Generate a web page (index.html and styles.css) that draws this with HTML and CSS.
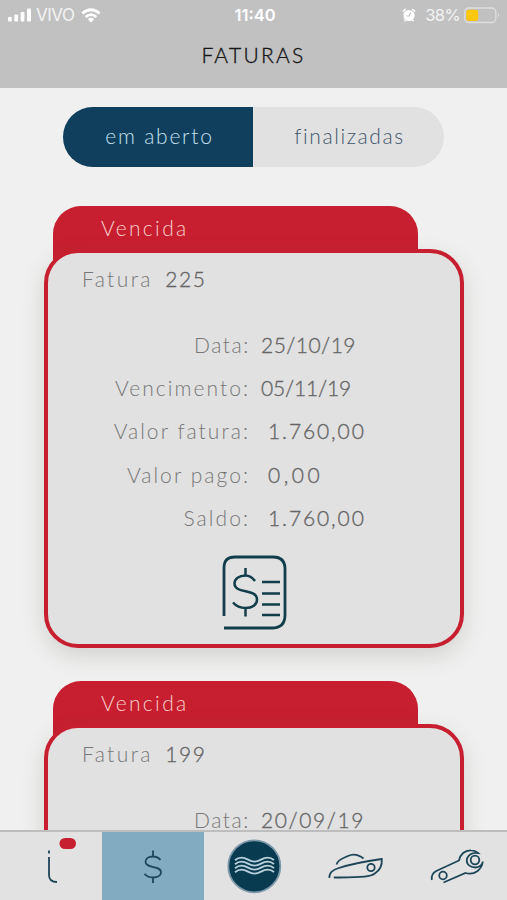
FILE: index.html
```html
<!DOCTYPE html>
<html lang="pt-BR">
<head>
<meta charset="utf-8">
<title>Faturas</title>
<link rel="stylesheet" href="styles.css">
</head>
<body>
<div class="app">
  <header class="header">
    <div class="status">
      <div class="status-left">
        <svg class="signal" width="24" height="14" viewBox="0 0 24 14"><rect x="0" y="9" width="3.8" height="4.5" rx="1"/><rect x="6.3" y="6.5" width="3.8" height="7" rx="1"/><rect x="12.6" y="4" width="3.8" height="9.5" rx="1"/><rect x="19" y="0.5" width="4" height="13" rx="1"/></svg>
        <span class="carrier">VIVO</span>
        <svg class="wifi" width="20" height="15" viewBox="0 0 20 15"><path d="M1.3 5.5Q10 -2 18.7 5.5" class="arc"/><path d="M4.6 9Q10 4.4 15.4 9" class="arc"/><path d="M6.8 11.2Q10 8.5 13.2 11.2L10 14.5Z"/></svg>
      </div>
      <span class="clock">11:40</span>
      <div class="status-right">
        <svg class="alarm" width="14" height="14" viewBox="0 0 14 14"><circle cx="7" cy="7.5" r="5.6"/><path d="M.8 3.6 3.7 1M13.2 3.6 10.3 1M3.5 12l-1 1.3M10.5 12l1 1.3" class="arm"/><path d="M8.6 4.4 7.2 8H4.5" class="hands"/></svg>
        <span class="percent">38%</span>
        <svg class="battery" width="36" height="17" viewBox="0 0 36 17"><rect x=".8" y="1" width="31" height="14.5" rx="4" class="shell"/><rect x="2.2" y="2.7" width="12" height="11.2" rx="2.4" class="level"/><path d="M34 6q2 2.2 0 4.4Z" class="tip"/></svg>
      </div>
    </div>
    <h1 class="title">FATURAS</h1>
  </header>

  <main class="content">
    <div class="segments">
      <div class="segment active"><span class="open-label">em aberto</span></div>
      <div class="segment"><span class="done-label">finalizadas</span></div>
    </div>

    <section class="invoice">
      <div class="tab">Vencida</div>
      <div class="card">
        <div class="number"><span>Fatura</span><span class="number-value">225</span></div>
        <dl class="details">
          <dt class="l-data">Data:</dt><dd class="date-a">25/10/19</dd>
          <dt>Vencimento:</dt><dd class="date-b">05/11/19</dd>
          <dt>Valor fatura:</dt><dd class="money">1.760,00</dd>
          <dt>Valor pago:</dt><dd class="money paid">0,00</dd>
          <dt>Saldo:</dt><dd class="money">1.760,00</dd>
        </dl>
        <svg class="bill" width="66" height="76" viewBox="0 0 66 76"><path d="M3 62V14Q3 3 14 3H52Q64 3 64 15V61Q64 74 51 74H3"/><path d="M34 27C31 23 28 21.500 24.500 21.500c-6.500 0-11 3.500-11 8C13.500 40.500 36 34 36 45.500c0 5-4.500 8.500-11.500 8.500-5.500 0-9.500-2-12.500-5.500M24.500 14v7.500M24.500 54v8.500" class="thin"/><path d="M41 28H59M41 39.500H59M41 50.500H59M41 61H59" class="thin"/></svg>
      </div>
    </section>

    <section class="invoice">
      <div class="tab">Vencida</div>
      <div class="card">
        <div class="number"><span>Fatura</span><span class="number-value">199</span></div>
        <dl class="details">
          <dt class="l-data">Data:</dt><dd>20/09/19</dd>
        </dl>
      </div>
    </section>
  </main>

  <nav class="nav">
    <div class="item">
      <svg width="101" height="68" viewBox="0 832 101 68"><path d="M49 850.500v3M49 857v18q0 7 8 7"/><rect x="59.500" y="838" width="16.500" height="11" rx="5.500" class="badge"/></svg>
    </div>
    <div class="item selected">
      <svg width="102" height="68" viewBox="102 832 102 68"><path d="M160.500 860c-2-2.500-4.500-3.500-7.500-3.500-4.500 0-7.500 2.300-7.500 5.300 0 7.500 15.500 3 15.500 10.400 0 3.300-3.300 5.300-8 5.300-3.700 0-6.500-1.200-8.500-3.700M153 850.500v6M153 877.500v5.500"/></svg>
    </div>
    <div class="item">
      <svg width="101" height="68" viewBox="204 832 101 68"><circle cx="254.300" cy="866.300" r="26" class="disc"/><g class="waves"><path id="wave" d="M235 860.200q3-2.600 6.500-2.600c6 0 7 4 13 4s7-4 13-4q4 0 6.500 2.600"/><use href="#wave" y="4"/><use href="#wave" y="8"/><use href="#wave" y="12"/></g></svg>
    </div>
    <div class="item">
      <svg width="101" height="68" viewBox="305 832 101 68"><path d="M336.500 864.500C338 859 344 858 348 856c6-3 11-1 15.500 2.500M329.300 878q0-7 8-9.500 16-5.500 44.500-9.500c.5 6-1.500 11-7 14.500-4 3-10 4.200-41 4"/><circle cx="371" cy="867.500" r="3.700"/></svg>
    </div>
    <div class="item">
      <svg width="101" height="68" viewBox="406 832 101 68"><path d="M431.800 880q-1-6 4.500-9L459 860.500c1-6 6-10.500 12-10.200q4 0 7 2.700-8-1-11 5.500c-1.500 7 5 9 8.500 9 4 0 7-3 7.300-6-1 8-8 14-17.300 11.500L443.500 882.500"/><circle cx="443" cy="875.500" r="3.800"/><circle cx="475" cy="860" r="4.300"/></svg>
    </div>
  </nav>
</div>
</body>
</html>
```
FILE: styles.css
```css
* { box-sizing: border-box; }
body { margin: 0; background: #f0f0f0; font-family: Lato, "Open Sans", sans-serif; font-weight: 300; font-size: 21px; line-height: 26px; }
.app { width: 507px; height: 900px; display: flex; flex-direction: column; overflow: hidden; white-space: nowrap; }
svg { display: block; flex: none; }

.header { height: 88px; flex: none; background: #c1c1c1; }
.status { height: 30px; padding: 0 7px 0 8px; display: grid; grid-template-columns: 1fr auto 1fr; align-items: center; color: #fff; fill: #fff; font: 400 17px/20px Inter, sans-serif; }
.status-left, .status-right { display: flex; align-items: center; }
.status-right { justify-content: flex-end; }
.carrier { margin: 0 7px 0 4px; color: #f3f3f3; letter-spacing: -.5px; }
.arc { fill: none; stroke: #fff; stroke-width: 2.700; }
.clock { padding-left: 2px; font-weight: 600; font-size: 16.500px; }
.percent { margin: 0 4px 0 9px; font-size: 16.500px; letter-spacing: -.6px; color: #f3f3f3; }
.arm { stroke: #fff; stroke-width: 1.500; }
.hands { fill: none; stroke: #c1c1c1; stroke-width: 1.200; }
.shell { fill: none; stroke: #dedede; stroke-width: 1.300; }
.level { fill: #fdc70c; }
.tip { fill: #dedede; }
.title { margin: 11px 0 0; text-align: center; font-size: 21px; line-height: 28px; font-weight: 300; letter-spacing: 2.300px; color: #161616; -webkit-text-stroke: .35px; }

.content { flex: 1; min-height: 0; overflow: hidden; padding: 19px 43px 0 44px; }
.segments { width: 381px; height: 60px; margin: 0 0 39px 19px; display: flex; border-radius: 30px; overflow: hidden; background: #e1e1e1; color: #40566c; }
.segment { flex: 1; display: flex; align-items: center; justify-content: center; padding-bottom: 3px; }
.segment.active { flex: 0 0 190px; padding-left: 3px; background: #103e5d; color: #c4e1ee; }
.open-label { letter-spacing: 1.750px; }
.done-label { padding-left: 2px; letter-spacing: 1.600px; }

.invoice { margin-bottom: 33px; }
.tab { width: 365px; height: 70px; margin-left: 9px; padding: 9px 48px; border-radius: 28px 28px 0 0; background: #c71f2f; color: #f7cdca; letter-spacing: 2.350px; }
.card { position: relative; height: 399px; margin-top: -27px; padding: 13px 34px; border: 4px solid #c71f2f; border-radius: 34px; background: #e1e1e1; box-shadow: 0 8px 22px rgba(80, 80, 60, .18); color: #777; }
.number { display: flex; gap: 12.500px; letter-spacing: 2.400px; }
.number-value { letter-spacing: 1.500px; }
.number-value, dd { color: #666; -webkit-text-stroke: .35px; }
.details { margin: 31px 0 0; display: grid; grid-template-columns: 168px auto; grid-auto-rows: 43.200px; column-gap: 11px; line-height: 43.200px; }
dt { text-align: right; letter-spacing: 2.050px; }
.l-data { letter-spacing: 1.600px; }
dd { margin: 0; letter-spacing: 1.600px; }
.date-a { letter-spacing: .450px; }
.date-b { letter-spacing: -.150px; }
dd.money { padding-left: 7px; letter-spacing: 1.900px; }
dd.paid { letter-spacing: 3.500px; }
.bill { margin: 15px 0 0 139px; fill: none; stroke: #123d4a; stroke-width: 2.800; }
.bill .thin { stroke-width: 2.500; }

.nav { height: 70px; flex: none; display: flex; border-top: 2px solid #bdbdbd; background: #e2e2e2; }
.item { flex: 0 0 101px; fill: none; stroke: #1d4558; stroke-width: 1.800; }
.item:first-child { flex-basis: 102px; }
.selected { flex-basis: 102px; background: #82abc2; }
.badge { fill: #c71f2f; stroke: none; }
.disc { fill: #083b50; stroke: #7c98a9; stroke-width: 1.800; }
.waves { stroke: #b8d0dc; stroke-width: 1.900; }
```
